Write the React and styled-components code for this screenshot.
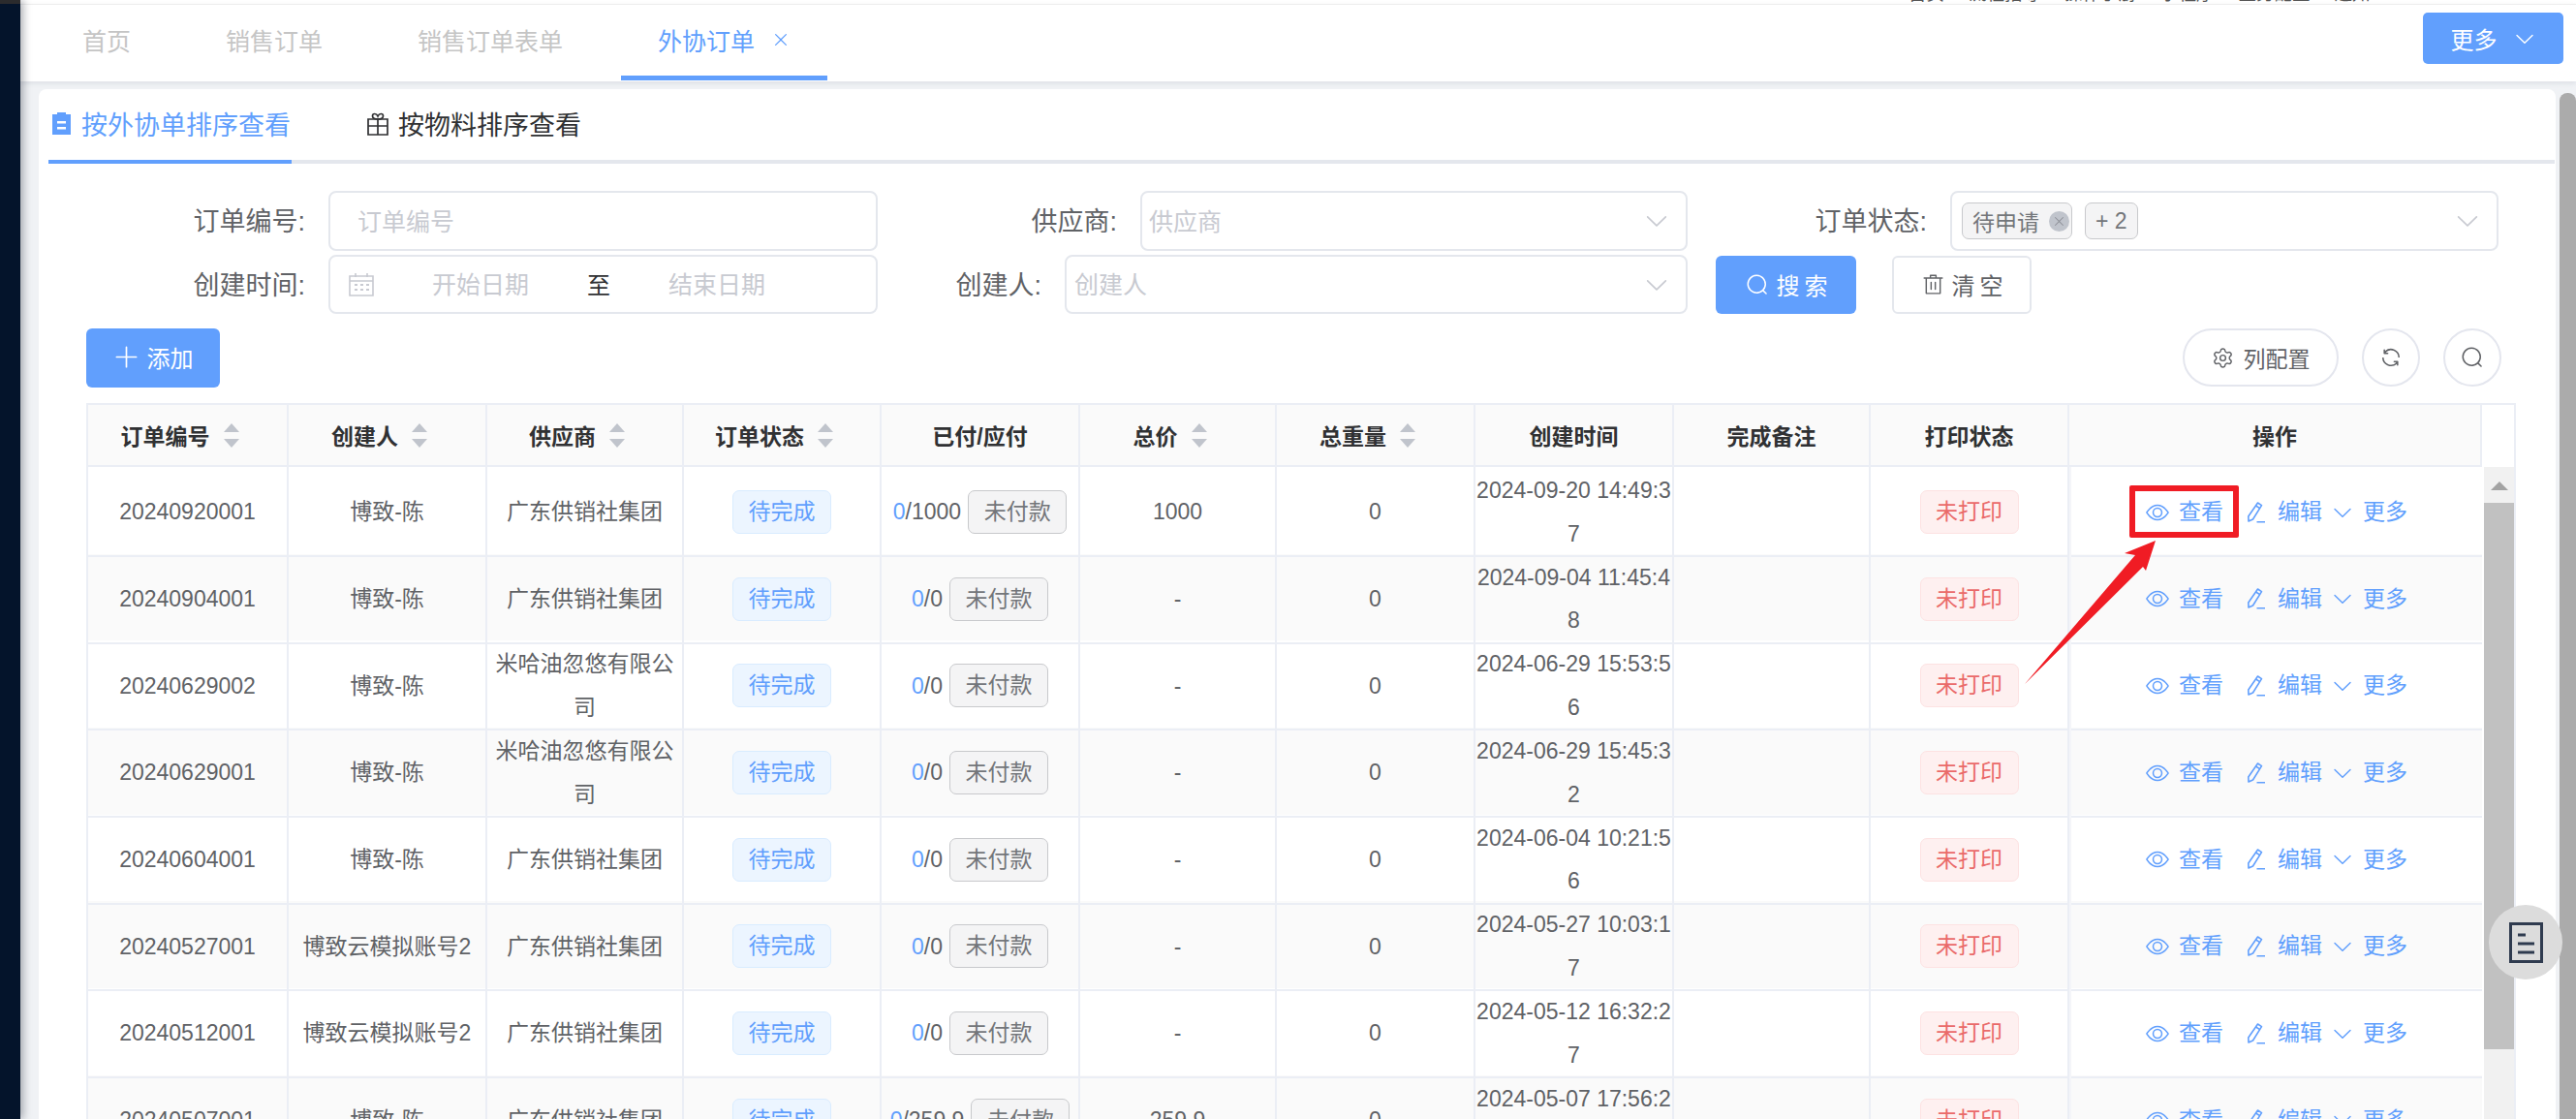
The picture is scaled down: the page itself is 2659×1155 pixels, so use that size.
import React from "react";
import styled, { createGlobalStyle } from "styled-components";
import { Settings } from "lucide-react";

const BLUE = "#619ffd";
const TEXT = "#606266";
const LINE = "#ebeef5";
const COLS = "207px 205px 203px 204px 205px 203px 205px 205px 203px 205px 426px";

const GlobalStyle = createGlobalStyle`
  html, body {
    margin: 0;
    padding: 0;
    background: #f0f2f5;
  }
  body {
    font-family: "Liberation Sans", "Noto Sans CJK SC", sans-serif;
    color: ${TEXT};
  }
  * {
    box-sizing: border-box;
  }
`;

const Page = styled.div`
  position: relative;
  display: flex;
  width: 2659px;
  height: 1155px;
  overflow: hidden;
`;
const Sidebar = styled.div`
  position: relative;
  z-index: 2;
  flex: 0 0 21px;
  background: linear-gradient(#2b2b2d 0 4px, #04142b 4px);
  box-shadow: 3px 0 8px rgba(20, 25, 40, 0.35);
`;
const Main = styled.div`
  flex: 1;
  min-width: 0;
  display: flex;
  flex-direction: column;
`;
const TopStrip = styled.div`
  flex: 0 0 4px;
  display: flex;
  align-items: flex-end;
  gap: 25px;
  padding-left: 1949px;
  overflow: hidden;
  background: #fff;
  color: #555;
  font-size: 18.5px;
  line-height: 20px;
  white-space: nowrap;
`;
const TabBar = styled.div`
  position: relative;
  flex: 0 0 80px;
  display: flex;
  justify-content: space-between;
  padding: 0 13px 0 26px;
  background: #fff;
  border-top: 1px solid #eeeeee;
  box-shadow: 0 2px 5px rgba(60, 70, 100, 0.1);
`;
const PageTabs = styled.div`
  display: flex;
  gap: 22px;
  height: 78px;
`;
const PageTab = styled.div`
  display: flex;
  align-items: center;
  gap: 17px;
  padding: 0 38px 2px;
  font-size: 25px;
  color: ${(p) => (p.$active ? BLUE : "#c5c5c5")};
  border-bottom: 5px solid ${(p) => (p.$active ? BLUE : "transparent")};
`;
const MoreButton = styled.div`
  align-self: flex-start;
  margin-top: 8px;
  width: 145px;
  height: 53px;
  display: flex;
  align-items: center;
  justify-content: center;
  gap: 16px;
  border-radius: 5px;
  background: ${BLUE};
  color: #fff;
  font-size: 24px;
`;
const Body = styled.div`
  flex: 1;
  min-height: 0;
  display: flex;
  padding: 8px 0 0 19px;
`;
const Card = styled.div`
  flex: 1;
  min-width: 0;
  padding: 0 1px 0 10px;
  background: #fff;
  border-radius: 8px 8px 0 0;
`;
const PageScroll = styled.div`
  flex: 0 0 17px;
  margin: 4px 0 0 4px;
  background: #ababab;
  border-radius: 8px 8px 0 0;
`;
const ViewTabs = styled.div`
  display: flex;
  height: 77px;
  border-bottom: 4px solid #e4e7ed;
`;
const ViewTab = styled.div`
  display: flex;
  align-items: center;
  gap: ${(p) => (p.$active ? 11 : 10)}px;
  height: 77px;
  padding: 0 1px 2px 4px;
  margin-right: ${(p) => p.$mr || 0}px;
  font-size: 27px;
  color: ${(p) => (p.$active ? BLUE : "#303133")};
  border-bottom: 4px solid ${(p) => (p.$active ? BLUE : "transparent")};
`;
const FormGrid = styled.div`
  display: grid;
  grid-template-columns: 856px 836px 837px;
  grid-template-rows: 62px 61px;
  row-gap: 4px;
  margin-top: 28px;
`;
const FormItem = styled.div`
  display: flex;
  align-items: center;
  justify-content: flex-end;
  gap: 24px;
`;
const ButtonItem = styled.div`
  display: flex;
  align-items: center;
  gap: 37px;
  padding-left: 29px;
`;
const Label = styled.span`
  padding-bottom: 3px;
  font-size: 27px;
  color: ${TEXT};
  white-space: nowrap;
`;
const Field = styled.div`
  flex: 0 0 ${(p) => p.$w}px;
  height: 100%;
  display: flex;
  align-items: center;
  padding: 0 ${(p) => p.$pr || 0}px 0 ${(p) => p.$pl || 0}px;
  gap: ${(p) => p.$gap || 0}px;
  border: 2px solid #e4e7ed;
  border-radius: 8px;
  font-size: 25px;
`;
const Placeholder = styled.span`
  padding-bottom: 3px;
  color: #c8cad1;
  font-size: 25px;
`;
const DateSep = styled.span`
  padding-bottom: 3px;
  color: #303133;
  font-size: 24px;
`;
const Chevron = styled.span`
  display: flex;
  margin-left: auto;
  color: #c8cad1;
`;
const SelectTag = styled.span`
  height: 38px;
  display: inline-flex;
  align-items: center;
  gap: 10px;
  padding: 0 2px 0 10px;
  background: #f4f4f5;
  border: 1px solid #c8c9cc;
  border-radius: 7px;
  color: #73767a;
  font-size: 23px;
  ${(p) => p.$count && "padding: 0 10px;"}
`;
const TagClose = styled.span`
  width: 21px;
  height: 21px;
  display: flex;
  align-items: center;
  justify-content: center;
  border-radius: 50%;
  background: #c0c4cc;
  color: #8d9098;
`;
const FormButton = styled.div`
  width: ${(p) => p.$w}px;
  height: 60px;
  display: flex;
  align-items: center;
  justify-content: center;
  gap: 8px;
  padding-left: 6px;
  border-radius: 6px;
  font-size: 24px;
  letter-spacing: 5px;
  background: ${(p) => (p.$primary ? BLUE : "#fff")};
  color: ${(p) => (p.$primary ? "#fff" : TEXT)};
  border: ${(p) => (p.$primary ? "none" : "2px solid #e4e7ed")};
`;
const Toolbar = styled.div`
  display: flex;
  justify-content: space-between;
  width: 2493px;
  height: 61px;
  margin: 15px 0 0 39px;
`;
const AddButton = styled.div`
  width: 138px;
  display: flex;
  align-items: center;
  justify-content: center;
  gap: 8px;
  padding-bottom: 2px;
  border-radius: 6px;
  background: ${BLUE};
  color: #fff;
  font-size: 24px;
`;
const ToolGroup = styled.div`
  display: flex;
  gap: 24px;
`;
const PillButton = styled.div`
  width: ${(p) => p.$w}px;
  height: 60px;
  display: flex;
  align-items: center;
  justify-content: center;
  gap: 10px;
  border: 2px solid #e4e6ee;
  border-radius: 30px;
  color: ${TEXT};
  font-size: 23px;
`;
const TableBox = styled.div`
  width: 2508px;
  margin: 16px 0 0 39px;
  border: 2px solid ${LINE};
  border-bottom: none;
  color: ${TEXT};
  font-size: 23px;
`;
const HeadRow = styled.div`
  display: grid;
  grid-template-columns: ${COLS} 33px;
  height: 64px;
`;
const HeadCell = styled.div`
  display: flex;
  align-items: center;
  justify-content: center;
  gap: 14px;
  padding-right: ${(p) => (p.$sort ? 16 : 0)}px;
  background: #fafafa;
  border-right: 2px solid ${LINE};
  border-bottom: 2px solid ${LINE};
  color: #303133;
  font-weight: 700;
`;
const SortArrows = styled.span`
  display: flex;
  flex-direction: column;
  gap: 7px;
  &::before,
  &::after {
    content: "";
    width: 0;
    height: 0;
    border-left: 8.5px solid transparent;
    border-right: 8.5px solid transparent;
  }
  &::before {
    border-bottom: 9px solid #c0c4cc;
  }
  &::after {
    border-top: 9px solid #c0c4cc;
  }
`;
const TableBody = styled.div`
  display: flex;
`;
const Rows = styled.div`
  flex: 0 0 2471px;
`;
const Row = styled.div`
  display: grid;
  grid-template-columns: ${COLS};
  height: 89.7px;
  background: ${(p) => (p.$striped ? "#fafafa" : "#fff")};
`;
const Cell = styled.div`
  display: flex;
  flex-wrap: wrap;
  align-items: center;
  align-content: center;
  justify-content: center;
  padding: 2px 0 0;
  text-align: center;
  line-height: 44.5px;
  word-break: break-all;
  border-right: 2px solid ${LINE};
  border-bottom: 2px solid ${LINE};
`;
const ActionCell = styled(Cell)`
  flex-wrap: nowrap;
  gap: 9px;
  color: ${BLUE};
  border-left: 2px solid #f4f5f9;
  border-right: none;
`;
const ActionLink = styled.span`
  display: inline-flex;
  align-items: center;
  gap: ${(p) => p.$gap}px;
  margin-right: ${(p) => p.$mr || 0}px;
  line-height: 1;
`;
const StatusTag = styled.span`
  width: ${(p) => p.$w}px;
  height: 45px;
  display: inline-flex;
  align-items: center;
  justify-content: center;
  border-radius: 7px;
  line-height: 1;
  background: ${(p) => (p.$danger ? "#fef0f0" : "#ecf5ff")};
  border: 1px solid ${(p) => (p.$danger ? "#fde2e2" : "#d9ecff")};
  color: ${(p) => (p.$danger ? "#ea6a6a" : BLUE)};
`;
const PayButton = styled(StatusTag)`
  margin-left: 7px;
  background: #f4f4f5;
  border: 1px solid #c8c9cc;
  color: #73767a;
`;
const Paid = styled.span`
  color: ${BLUE};
`;
const ScrollTrack = styled.div`
  flex: 0 0 31px;
  margin-left: 2px;
  display: flex;
  flex-direction: column;
  background: #f1f1f1;
`;
const ScrollArrow = styled.div`
  flex: 0 0 37px;
  display: flex;
  justify-content: center;
  padding-top: 15px;
  &::before {
    content: "";
    height: 0;
    border-left: 9px solid transparent;
    border-right: 9px solid transparent;
    border-bottom: 9px solid #a3a3a3;
  }
`;
const ScrollThumb = styled.div`
  flex: 0 0 564px;
  background: #c1c1c1;
`;
const FloatButton = styled.div`
  position: absolute;
  left: 2569px;
  top: 934px;
  z-index: 3;
  width: 76px;
  height: 77px;
  display: flex;
  align-items: center;
  justify-content: center;
  border-radius: 50%;
  background: #dcdcdc;
`;
const Marker = styled.div`
  position: absolute;
  left: 2198px;
  top: 501px;
  z-index: 3;
  width: 113px;
  height: 54px;
  border: 6px solid #f01c24;
  border-radius: 2px;
`;
const MarkerArrow = styled.svg`
  position: absolute;
  left: 2085px;
  top: 550px;
  z-index: 3;
`;

const PATHS = {
  view: "M512 160c320 0 512 352 512 352S832 864 512 864 0 512 0 512s192-352 512-352zm0 64c-225.28 0-384.128 208.064-436.8 288 52.608 79.872 211.456 288 436.8 288 225.28 0 384.128-208.064 436.8-288-52.608-79.872-211.456-288-436.8-288zm0 64a224 224 0 1 1 0 448 224 224 0 0 1 0-448zm0 64a160.192 160.192 0 0 0-160 160c0 88.192 71.744 160 160 160s160-71.808 160-160-71.744-160-160-160z",
  search: "m795.904 750.72 124.992 124.928a32 32 0 0 1-45.248 45.248L750.656 795.904a416 416 0 1 1 45.248-45.248zM480 832a352 352 0 1 0 0-704 352 352 0 0 0 0 704z",
  down: "M831.872 340.864 512 652.672 192.128 340.864a30.592 30.592 0 0 0-42.752 0 29.12 29.12 0 0 0 0 41.6L489.664 714.24a32 32 0 0 0 44.672 0l340.288-331.712a29.12 29.12 0 0 0 0-41.728 30.592 30.592 0 0 0-42.752 0z",
  plus: "M480 480V128a32 32 0 0 1 64 0v352h352a32 32 0 1 1 0 64H544v352a32 32 0 1 1-64 0V544H128a32 32 0 0 1 0-64h352z",
  close: "M764.288 214.592 512 466.88 259.712 214.592a31.936 31.936 0 0 0-45.12 45.12L466.752 512 214.528 764.224a31.936 31.936 0 1 0 45.12 45.184L512 557.184l252.288 252.288a31.936 31.936 0 0 0 45.12-45.12L557.12 512.064l252.288-252.352a31.936 31.936 0 1 0-45.12-45.184z",
  trash: "M160 256H96a32 32 0 0 1 0-64h256V95.936a32 32 0 0 1 32-32h256a32 32 0 0 1 32 32V192h256a32 32 0 1 1 0 64h-64v672a32 32 0 0 1-32 32H192a32 32 0 0 1-32-32V256zm448-64v-64H416v64h192zM224 896h576V256H224v640zm192-128a32 32 0 0 1-32-32V416a32 32 0 0 1 64 0v320a32 32 0 0 1-32 32zm192 0a32 32 0 0 1-32-32V416a32 32 0 0 1 64 0v320a32 32 0 0 1-32 32z",
  refresh: "M771.776 794.88A384 384 0 0 1 128 512h64a320 320 0 0 0 555.712 216.448H654.72a32 32 0 1 1 0-64h149.056a32 32 0 0 1 32 32v148.928a32 32 0 1 1-64 0v-50.56zM276.288 295.616h92.992a32 32 0 0 1 0 64H220.16a32 32 0 0 1-32-32V178.56a32 32 0 0 1 64 0v50.56A384 384 0 0 1 896.128 512h-64a320 320 0 0 0-555.776-216.384z",
};

function Icon({ name, size }) {
  return (
    <svg width={size} height={size} viewBox="0 0 1024 1024" fill="currentColor">
      <path d={PATHS[name]} />
    </svg>
  );
}

function PenIcon() {
  return (
    <svg width="20" height="24" viewBox="0 0 20 24" fill="none" stroke="currentColor" strokeWidth="1.6">
      <path d="M11.5 2 15.5 4.6 6.5 19 2 21 1.8 16z" strokeLinejoin="round" />
      <path d="M9.6 5 13.6 7.6M10.5 21.8H19" />
    </svg>
  );
}

function ClipboardIcon() {
  return (
    <svg width="19" height="23" viewBox="0 0 19 23">
      <path d="M0 2h5V0h9v2h5v21H0z" fill={BLUE} />
      <path d="M5 9h9v2.4H5zM5 15h9v2.4H5z" fill="#fff" />
    </svg>
  );
}

function GiftIcon() {
  return (
    <svg width="22" height="24" viewBox="0 0 22 24" fill="none" stroke="#303133" strokeWidth="1.7">
      <path d="M1 7h20v16H1zM1 14h20M11 7v16" />
      <path d="M11 7C7 7 5.5 5.5 5.5 3.7 5.5 1 9.5 0.5 11 4 12.5 0.5 16.5 1 16.5 3.7 16.5 5.5 15 7 11 7z" />
    </svg>
  );
}

function CalendarIcon() {
  return (
    <svg width="26" height="24" viewBox="0 0 26 24" fill="none" stroke="#c8cad1" strokeWidth="1.6">
      <path d="M1 3h24v20H1zM1 8h24M7 0v4M19 0v4" />
      <path d="M6 12h3M12 12h3M18 12h3M6 17h3M12 17h3M18 17h3" strokeWidth="2" />
    </svg>
  );
}

function DocIcon() {
  return (
    <svg width="35" height="42" viewBox="0 0 35 42" fill="none" stroke="#2f3b4f">
      <path d="M1.5 1.5h32v39h-32z" strokeWidth="3" />
      <path d="M9 13h8M9 22h17M9 31h17" strokeWidth="3" />
    </svg>
  );
}

const PAGE_TABS = ["首页", "销售订单", "销售订单表单"];
const TOP_LINKS = ["首页", "流程指导", "操作手册", "小程序", "业务配置", "通知"];
const HEADS = [
  ["订单编号", true],
  ["创建人", true],
  ["供应商", true],
  ["订单状态", true],
  ["已付/应付", false],
  ["总价", true],
  ["总重量", true],
  ["创建时间", false],
  ["完成备注", false],
  ["打印状态", false],
  ["操作", false],
];

const GD = "广东供销社集团";
const MH = "米哈油忽悠有限公司";
const BZ = "博致-陈";
const YM = "博致云模拟账号2";
const ROWS = [
  ["20240920001", BZ, GD, "1000", "1000", "2024-09-20 14:49:37"],
  ["20240904001", BZ, GD, "0", "-", "2024-09-04 11:45:48"],
  ["20240629002", BZ, MH, "0", "-", "2024-06-29 15:53:56"],
  ["20240629001", BZ, MH, "0", "-", "2024-06-29 15:45:32"],
  ["20240604001", BZ, GD, "0", "-", "2024-06-04 10:21:56"],
  ["20240527001", YM, GD, "0", "-", "2024-05-27 10:03:17"],
  ["20240512001", YM, GD, "0", "-", "2024-05-12 16:32:27"],
  ["20240507001", BZ, GD, "259.9", "259.9", "2024-05-07 17:56:27"],
];

function OrderRow({ row, striped }) {
  const [no, creator, supplier, due, total, time] = row;
  return (
    <Row $striped={striped}>
      <Cell>{no}</Cell>
      <Cell>{creator}</Cell>
      <Cell>{supplier}</Cell>
      <Cell>
        <StatusTag $w={102}>待完成</StatusTag>
      </Cell>
      <Cell>
        <span>
          <Paid>0</Paid>/{due}
        </span>
        <PayButton $w={102}>未付款</PayButton>
      </Cell>
      <Cell>{total}</Cell>
      <Cell>0</Cell>
      <Cell>{time}</Cell>
      <Cell />
      <Cell>
        <StatusTag $w={102} $danger>
          未打印
        </StatusTag>
      </Cell>
      <ActionCell>
        <ActionLink $gap={10} $mr={15}>
          <Icon name="view" size={24} />
          查看
        </ActionLink>
        <ActionLink $gap={12}>
          <PenIcon />
          编辑
        </ActionLink>
        <ActionLink $gap={9}>
          <Icon name="down" size={24} />
          更多
        </ActionLink>
      </ActionCell>
    </Row>
  );
}

export default function App() {
  return (
    <Page>
      <GlobalStyle />
      <Sidebar />
      <Main>
        <TopStrip>
          {TOP_LINKS.map((t) => (
            <span key={t}>{t}</span>
          ))}
        </TopStrip>
        <TabBar>
          <PageTabs>
            {PAGE_TABS.map((t) => (
              <PageTab key={t}>{t}</PageTab>
            ))}
            <PageTab $active>
              外协订单
              <Icon name="close" size={20} />
            </PageTab>
          </PageTabs>
          <MoreButton>
            更多
            <Icon name="down" size={24} />
          </MoreButton>
        </TabBar>
        <Body>
          <Card>
            <ViewTabs>
              <ViewTab $active $mr={74}>
                <ClipboardIcon />
                按外协单排序查看
              </ViewTab>
              <ViewTab>
                <GiftIcon />
                按物料排序查看
              </ViewTab>
            </ViewTabs>

            <FormGrid>
              <FormItem>
                <Label>订单编号:</Label>
                <Field $w={567} $pl={28}>
                  <Placeholder>订单编号</Placeholder>
                </Field>
              </FormItem>
              <FormItem>
                <Label>供应商:</Label>
                <Field $w={565} $pl={7} $pr={16}>
                  <Placeholder>供应商</Placeholder>
                  <Chevron>
                    <Icon name="down" size={28} />
                  </Chevron>
                </Field>
              </FormItem>
              <FormItem>
                <Label>订单状态:</Label>
                <Field $w={566} $pl={10} $pr={16} $gap={13}>
                  <SelectTag>
                    待申请
                    <TagClose>
                      <Icon name="close" size={15} />
                    </TagClose>
                  </SelectTag>
                  <SelectTag $count>+ 2</SelectTag>
                  <Chevron>
                    <Icon name="down" size={28} />
                  </Chevron>
                </Field>
              </FormItem>
              <FormItem>
                <Label>创建时间:</Label>
                <Field $w={567} $pl={19} $gap={60}>
                  <CalendarIcon />
                  <Placeholder>开始日期</Placeholder>
                  <DateSep>至</DateSep>
                  <Placeholder>结束日期</Placeholder>
                </Field>
              </FormItem>
              <FormItem>
                <Label>创建人:</Label>
                <Field $w={643} $pl={8} $pr={16}>
                  <Placeholder>创建人</Placeholder>
                  <Chevron>
                    <Icon name="down" size={28} />
                  </Chevron>
                </Field>
              </FormItem>
              <ButtonItem>
                <FormButton $w={145} $primary>
                  <Icon name="search" size={24} />
                  搜索
                </FormButton>
                <FormButton $w={144}>
                  <Icon name="trash" size={23} />
                  清空
                </FormButton>
              </ButtonItem>
            </FormGrid>

            <Toolbar>
              <AddButton>
                <Icon name="plus" size={27} />
                添加
              </AddButton>
              <ToolGroup>
                <PillButton $w={161}>
                  <Settings size={23} strokeWidth={1.5} />
                  列配置
                </PillButton>
                <PillButton $w={60}>
                  <Icon name="refresh" size={24} />
                </PillButton>
                <PillButton $w={60}>
                  <Icon name="search" size={24} />
                </PillButton>
              </ToolGroup>
            </Toolbar>

            <TableBox>
              <HeadRow>
                {HEADS.map(([title, sort]) => (
                  <HeadCell key={title} $sort={sort}>
                    {title}
                    {sort && <SortArrows />}
                  </HeadCell>
                ))}
                <span />
              </HeadRow>
              <TableBody>
                <Rows>
                  {ROWS.map((row, i) => (
                    <OrderRow key={row[0]} row={row} striped={i % 2 === 1} />
                  ))}
                </Rows>
                <ScrollTrack>
                  <ScrollArrow />
                  <ScrollThumb />
                </ScrollTrack>
              </TableBody>
            </TableBox>
          </Card>
          <PageScroll />
        </Body>
      </Main>

      <Marker />
      <MarkerArrow width="145" height="160" viewBox="0 0 145 160">
        <polygon points="140,8 108,21 119,23 5,156 127,35 130,39" fill="#f01c24" />
      </MarkerArrow>
      <FloatButton>
        <DocIcon />
      </FloatButton>
    </Page>
  );
}
